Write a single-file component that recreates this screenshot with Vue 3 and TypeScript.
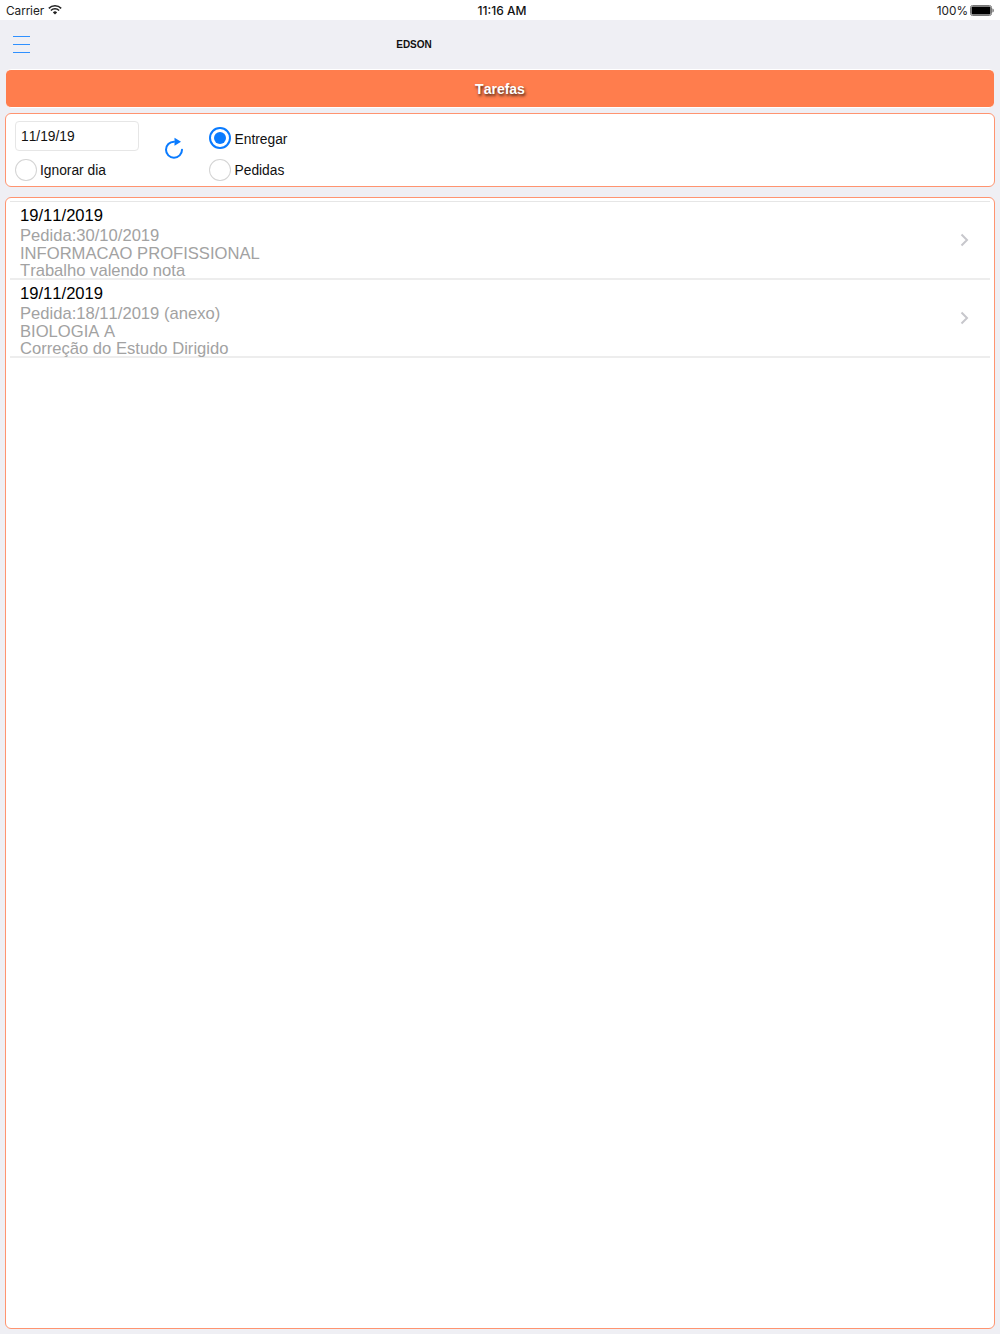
<template>
  <div class="screen">
    <div class="status-bar">
      <div class="status-left">
        <span>Carrier</span>
        <svg class="wifi" width="14" height="10" viewBox="0 0 14 10">
          <path d="M0.8 3.4a8.8 8.8 0 0 1 12.4 0" fill="none" stroke="#222" stroke-width="1.5" />
          <path d="M2.9 5.5a5.8 5.8 0 0 1 8.2 0" fill="none" stroke="#222" stroke-width="1.5" />
          <path d="M4.9 7.4L7 9.6l2.1-2.2a3 3 0 0 0-4.2 0z" fill="#222" />
        </svg>
      </div>
      <div class="status-time">11:16 AM</div>
      <div class="status-right">
        <span>100%</span>
        <svg width="24" height="11" viewBox="0 0 24 11">
          <rect x="0.5" y="0.5" width="21" height="10" rx="2" fill="none" stroke="#777" />
          <rect x="1.5" y="1.5" width="19" height="8" rx="1" fill="#000" />
          <path d="M22.5 3.5c.9.2 1.2 1 1.2 2s-.3 1.8-1.2 2z" fill="#555" />
        </svg>
      </div>
    </div>

    <div class="nav-bar">
      <button class="menu-btn" aria-label="Menu">
        <span></span><span></span><span></span>
      </button>
      <div class="nav-title">EDSON</div>
    </div>

    <div class="content">
      <div class="title-bar">Tarefas</div>

      <div class="panel filters">
        <div class="col-date">
          <div class="date-input">11/19/19</div>
          <label class="radio-row">
            <span class="radio"></span>
            <span>Ignorar dia</span>
          </label>
        </div>
        <svg class="refresh" width="20" height="22" viewBox="0 0 20 22">
          <path d="M10 4.7a8 8 0 1 0 8 8" fill="none" stroke="#0a7bff" stroke-width="2" stroke-linecap="round" />
          <path d="M10.5 .8l6.5 4-6.5 4z" fill="#0a7bff" />
        </svg>
        <div class="col-radios">
          <label v-for="opt in options" :key="opt" class="radio-row">
            <span class="radio" :class="{ on: opt === selected }"></span>
            <span class="radio-label">{{ opt }}</span>
          </label>
        </div>
      </div>

      <div class="panel list-panel">
        <div class="list">
          <div v-for="item in tasks" :key="item.subject" class="task">
            <div class="task-text">
              <div class="task-date">{{ item.date }}</div>
              <div class="task-line">{{ item.requested }}</div>
              <div class="task-line">{{ item.subject }}</div>
              <div class="task-line">{{ item.description }}</div>
            </div>
            <svg class="chevron" width="9" height="14" viewBox="0 0 9 14">
              <path d="M1.5 1.5L7 7l-5.5 5.5" fill="none" stroke="#c7c7cc" stroke-width="2" />
            </svg>
          </div>
        </div>
      </div>
    </div>
  </div>
</template>

<script setup lang="ts">
type Task = {
  date: string;
  requested: string;
  subject: string;
  description: string;
};

const options = ['Entregar', 'Pedidas'];
const selected = 'Entregar';

const tasks: Task[] = [
  {
    date: '19/11/2019',
    requested: 'Pedida:30/10/2019',
    subject: 'INFORMACAO PROFISSIONAL',
    description: 'Trabalho valendo nota'
  },
  {
    date: '19/11/2019',
    requested: 'Pedida:18/11/2019 (anexo)',
    subject: 'BIOLOGIA A',
    description: 'Correção do Estudo Dirigido'
  }
];
</script>

<style>
html, body {
  margin: 0;
  background: #efeff4;
}
</style>

<style scoped>
.screen {
  width: 1000px;
  height: 1334px;
  display: flex;
  flex-direction: column;
  background: #efeff4;
  font-family: "Liberation Sans", Arial, sans-serif;
  font-kerning: none;
  overflow: hidden;
}

.status-bar {
  height: 20px;
  flex: none;
  background: #fff;
  display: grid;
  grid-template-columns: 1fr auto 1fr;
  align-items: center;
  padding: 0 6px;
  font-family: Inter, "Liberation Sans", sans-serif;
  font-size: 11.8px;
  color: #222;
  box-sizing: border-box;
}

.status-left {
  display: flex;
  align-items: center;
  gap: 4px;
}

.status-left span,
.status-right span {
  padding-top: 2px;
}

.status-time {
  font-weight: 500;
  font-size: 12px;
  color: #111;
  padding-left: 4px;
}

.status-right {
  display: flex;
  align-items: center;
  justify-content: flex-end;
  gap: 2px;
}

.nav-bar {
  height: 48px;
  flex: none;
  position: relative;
  display: flex;
  align-items: center;
  justify-content: center;
}

.menu-btn {
  position: absolute;
  left: 13px;
  top: 16px;
  width: 17px;
  height: 17px;
  padding: 0;
  border: 0;
  background: none;
  display: flex;
  flex-direction: column;
  justify-content: space-between;
}

.menu-btn span {
  display: block;
  height: 1px;
  background: #2f90ff;
}

.nav-title {
  font-size: 10px;
  font-weight: 700;
  color: #111;
  margin-left: -172px;
}

.content {
  flex: 1;
  display: flex;
  flex-direction: column;
  padding: 1px 5px 5px;
  gap: 5px;
  min-height: 0;
}

.title-bar {
  height: 39px;
  flex: none;
  margin: 0 1px;
  border-radius: 5px;
  background: #ff7d4d;
  border-top: 1px solid #fff;
  border-bottom: 1px solid #fff;
  box-sizing: border-box;
  display: flex;
  align-items: center;
  justify-content: center;
  color: #fff;
  font-size: 14px;
  font-weight: 700;
  text-shadow: 1px 2px 3px rgba(0, 0, 0, 0.75);
}

.panel {
  background: #fff;
  border: 1px solid #ff9470;
  border-radius: 6px;
  box-sizing: border-box;
}

.filters {
  height: 74px;
  flex: none;
  display: flex;
  align-items: flex-start;
  padding: 7px 9px 0;
}

.col-date {
  width: 124px;
  display: flex;
  flex-direction: column;
  gap: 8px;
}

.date-input {
  height: 30px;
  box-sizing: border-box;
  border: 1px solid #e6e6e6;
  border-radius: 4px;
  padding: 7px 5px;
  font-size: 13.8px;
  line-height: 16px;
  color: #111;
}

.refresh {
  margin: 16px 0 0 25px;
}

.col-radios {
  margin: 6px 0 0 25px;
  display: flex;
  flex-direction: column;
  gap: 10px;
}

.radio-row {
  display: flex;
  align-items: center;
  gap: 3.5px;
  font-size: 13.8px;
  color: #111;
}

.col-radios .radio-row {
  gap: 4px;
}

.col-radios .radio-row:first-child .radio-label {
  padding-top: 2px;
}

.radio {
  width: 21.5px;
  height: 22px;
  box-sizing: border-box;
  border: 1px solid #d4d4d4;
  border-radius: 50%;
  background: #fff;
  display: flex;
  align-items: center;
  justify-content: center;
}

.radio.on {
  border: 2px solid #0a7bff;
}

.radio.on::after {
  content: "";
  width: 12px;
  height: 12px;
  border-radius: 50%;
  background: #0a7bff;
}

.list-panel {
  flex: 1;
  min-height: 0;
  margin-top: 5px;
  padding: 3px 4px 0;
}

.list {
  border-top: 1px solid #e6e6e6;
}

.task {
  height: 78px;
  box-sizing: border-box;
  border-bottom: 2px solid #ededed;
  padding: 3px 21px 0 10px;
  display: flex;
  align-items: center;
  justify-content: space-between;
}

.task-text {
  align-self: flex-start;
}

.task-date {
  font-size: 16.6px;
  line-height: 22px;
  color: #000;
}

.task-line {
  font-size: 16.6px;
  line-height: 17.5px;
  color: #a2a2a2;
}

.chevron {
  flex: none;
  margin-top: -3px;
}
</style>
